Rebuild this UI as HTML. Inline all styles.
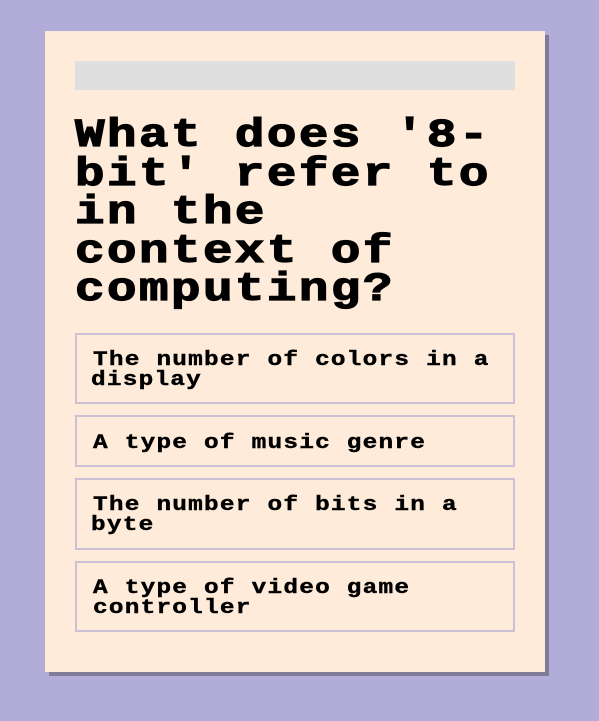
<!DOCTYPE html>
<html><head><meta charset="utf-8"><style>
html,body{margin:0;padding:0;}
body{width:599px;height:721px;background:#b1acd8;position:relative;overflow:hidden;font-family:"Liberation Mono",monospace;font-weight:bold;color:#000;}
.card{position:absolute;left:45px;top:31px;width:500px;height:641px;background:#feebd9;box-shadow:4px 4px 0 #807c98;}
.bar{position:absolute;left:30px;top:30px;width:440px;height:29px;background:#dfdfdf;}
.title{position:absolute;left:30px;top:87px;font-size:40px;line-height:38.5px;letter-spacing:2px;white-space:pre;transform:scaleX(1.23);transform-origin:0 0;-webkit-text-stroke:1.2px #000;}
.opt{position:absolute;left:30px;border:2px solid #cdbfd6;box-sizing:border-box;width:440px;}
.opt span{position:absolute;left:16px;font-size:20px;line-height:20px;letter-spacing:1px;white-space:pre;transform:scaleX(1.22);transform-origin:0 0;-webkit-text-stroke:0.4px #000;}
</style></head><body>
<div class="card">
<div class="bar"></div>
<div class="title">What does '8-
bit' refer to
in the
context of
computing?</div>
<div class="opt" style="top:302px;height:71px;"><span style="top:16px;left:16px">The number of colors in a</span><span style="top:36px;left:14px">display</span></div>
<div class="opt" style="top:384px;height:52px;"><span style="top:17px;">A type of music genre</span></div>
<div class="opt" style="top:447px;height:72px;"><span style="top:16px;left:16px">The number of bits in a</span><span style="top:36px;left:14px">byte</span></div>
<div class="opt" style="top:530px;height:71px;"><span style="top:16px;">A type of video game</span><span style="top:36px;">controller</span></div>
</div>
</body></html>
